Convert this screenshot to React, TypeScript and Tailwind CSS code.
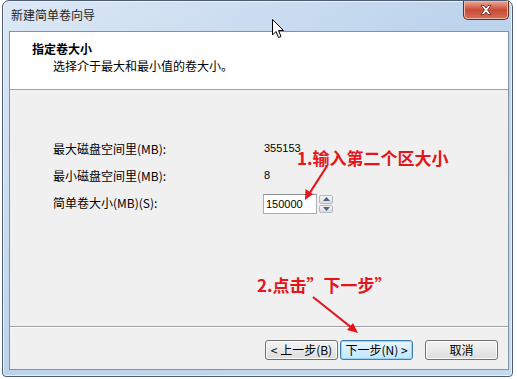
import React from 'react';

const cjk = { fontFamily: '"Noto Sans CJK SC", "Liberation Sans", sans-serif' };
const latin = { fontFamily: '"Liberation Sans", "Noto Sans CJK SC", sans-serif' };

// rows of the volume size form
const rows = [
  { label: '最大磁盘空间里(MB):', value: '355153' },
  { label: '最小磁盘空间里(MB):', value: '8' },
];

const WizardButton: React.FC<{ label: string; primary?: boolean; className?: string }> = ({
  label,
  primary,
  className,
}) => (
  <button
    className={
      primary
        ? `h-[20px] w-[73px] rounded-[3px] border border-[#3c7fb1] bg-gradient-to-b from-[#eaf6fd] to-[#bee6fd] text-[12px] leading-none text-black shadow-[inset_0_0_0_1px_#9cd3f5] ${className ?? ''}`
        : `h-[20px] w-[73px] rounded-[3px] border border-[#707070] bg-gradient-to-b from-[#f4f4f4] to-[#dddddd] text-[12px] leading-none text-black shadow-[inset_0_0_0_1px_#fcfcfc] ${className ?? ''}`
    }
    style={cjk}
  >
    {label}
  </button>
);

const Spinner: React.FC = () => (
  <div className="ml-[1px] flex h-[20px] w-[16px] flex-col gap-[1px] p-[1px]">
    <div className="flex flex-1 items-center justify-center rounded-[2px] border border-[#b4b8bf] bg-gradient-to-b from-[#f6f6f6] to-[#dcdcdc]">
      <svg width="7" height="4" viewBox="0 0 7 4">
        <path d="M0 4 L3.5 0 L7 4 Z" fill="#4d6185" />
      </svg>
    </div>
    <div className="flex flex-1 items-center justify-center rounded-[2px] border border-[#b4b8bf] bg-gradient-to-b from-[#f6f6f6] to-[#dcdcdc]">
      <svg width="7" height="4" viewBox="0 0 7 4">
        <path d="M0 0 L3.5 4 L7 0 Z" fill="#4d6185" />
      </svg>
    </div>
  </div>
);

const Annotations: React.FC = () => (
  <>
    <div
      className="absolute left-[297px] top-[147px] text-[17px] font-bold leading-[22px] text-[#e3161b]"
      style={cjk}
    >
      1.输入第二个区大小
    </div>
    <div
      className="absolute left-[257px] top-[274px] text-[17px] font-bold leading-[22px] text-[#e3161b]"
      style={cjk}
    >
      2.点击”下一步”
    </div>
    <svg className="absolute left-0 top-0" width="517" height="379" viewBox="0 0 517 379">
      <line x1="327" y1="166" x2="309" y2="194" stroke="#e3161b" strokeWidth="2.2" />
      <path d="M305 200 L305.5 189 L313 194 Z" fill="#e3161b" />
      <line x1="313" y1="297" x2="352" y2="328" stroke="#e3161b" strokeWidth="2.2" />
      <path d="M358 333 L347 330 L353 323 Z" fill="#e3161b" />
    </svg>
  </>
);

const Cursor: React.FC = () => (
  <svg className="absolute left-[272px] top-[19px]" width="13" height="20" viewBox="0 0 13 20">
    <path
      d="M0.5 0.5 L0.5 16 L4 12.5 L6.5 18.5 L9 17.5 L6.5 11.5 L11.5 11.5 Z"
      fill="#ffffff"
      stroke="#000000"
      strokeWidth="1"
      strokeLinejoin="round"
    />
  </svg>
);

export default function App() {
  return (
    <div className="relative h-[379px] w-[517px] overflow-hidden bg-white">
      <div className="ml-[2px] flex h-[377px] w-[511px] flex-col rounded-t-[7px] rounded-b-[4px] border border-[#4e5d72] bg-gradient-to-br from-[#dce8f5] via-[#bcd3ec] to-[#c6daef] shadow-[inset_0_0_0_1px_#e8f0f9]">
        {/* title bar */}
        <div className="flex h-[30px] items-start justify-between">
          <span className="ml-[8px] mt-[6px] text-[12px] leading-[16px] text-[#1e1e1e]" style={cjk}>
            新建简单卷向导
          </span>
          <div className="mr-[3px] flex h-[19px] w-[46px] items-center justify-center rounded-b-[5px] border border-t-0 border-[#6a2a1e] bg-gradient-to-b from-[#e9a898] via-[#c84a33] to-[#d2705a] shadow-[inset_0_0_0_1px_#f0b8a8]">
            <svg width="12" height="10" viewBox="0 0 12 10">
              <path
                d="M1 0.5 L4 0.5 L6 3 L8 0.5 L11 0.5 L7.5 5 L11 9.5 L8 9.5 L6 7 L4 9.5 L1 9.5 L4.5 5 Z"
                fill="#ffffff"
                stroke="#5a2218"
                strokeWidth="0.8"
              />
            </svg>
          </div>
        </div>

        {/* client area */}
        <div className="mb-[6px] ml-[6px] mr-[3px] flex flex-1 flex-col border border-[#7d92ad] bg-[#f0f0f0]">
          <div className="h-[58px] border-b border-[#a0a0a0] bg-white pl-[22px] pt-[9px]" style={cjk}>
            <div className="text-[12px] font-bold leading-[16px] text-black">指定卷大小</div>
            <div className="ml-[21px] mt-[1px] text-[12px] leading-[16px] text-black">
              选择介于最大和最小值的卷大小。
            </div>
          </div>

          <div className="flex flex-1 flex-col pl-[43px] pt-[45px]">
            {rows.map((row) => (
              <div key={row.label} className="flex h-[27px] items-center">
                <span className="w-[211px] text-[12px] text-black" style={cjk}>
                  {row.label}
                </span>
                <span className="text-[11px] text-black" style={latin}>
                  {row.value}
                </span>
              </div>
            ))}
            <div className="flex h-[27px] items-center">
              <span className="w-[210px] text-[12px] text-black" style={cjk}>
                简单卷大小(MB)(S):
              </span>
              <div className="mt-[3px] flex items-center">
                <div
                  className="flex h-[20px] w-[54px] items-center border border-[#abadb3] border-t-[#8c8f94] bg-white pl-[2px] text-[11px] text-black"
                  style={latin}
                >
                  150000
                </div>
                <Spinner />
              </div>
            </div>
          </div>

          <div className="flex h-[43px] items-start justify-end border-t border-[#a0a0a0] pr-[10px] pt-[13px] shadow-[inset_0_1px_0_#ffffff]">
            <WizardButton label="< 上一步(B)" />
            <WizardButton label="下一步(N) >" primary className="ml-[2px]" />
            <WizardButton label="取消" className="ml-[12px]" />
          </div>
        </div>
      </div>

      <Annotations />
      <Cursor />
    </div>
  );
}
